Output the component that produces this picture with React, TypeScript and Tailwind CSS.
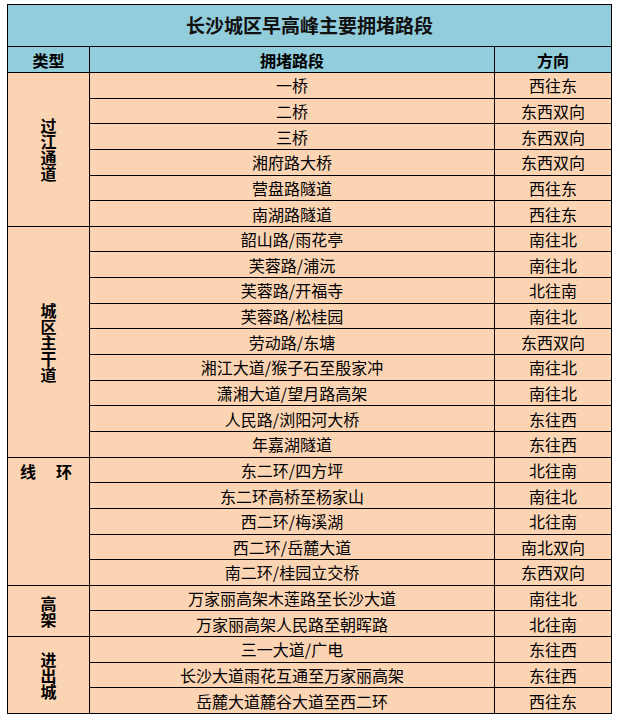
import React from "react";

type Row = [string, string];
type Group = { label: string; kind: "v" | "h"; rows: Row[] };

const groups: Group[] = [
  {
    label: "过江通道",
    kind: "v",
    rows: [
      ["一桥", "西往东"],
      ["二桥", "东西双向"],
      ["三桥", "东西双向"],
      ["湘府路大桥", "东西双向"],
      ["营盘路隧道", "西往东"],
      ["南湖路隧道", "西往东"],
    ],
  },
  {
    label: "城区主干道",
    kind: "v",
    rows: [
      ["韶山路/雨花亭", "南往北"],
      ["芙蓉路/浦沅", "南往北"],
      ["芙蓉路/开福寺", "北往南"],
      ["芙蓉路/松桂园", "南往北"],
      ["劳动路/东塘", "东西双向"],
      ["湘江大道/猴子石至殷家冲", "南往北"],
      ["潇湘大道/望月路高架", "南往北"],
      ["人民路/浏阳河大桥", "东往西"],
      ["年嘉湖隧道", "东往西"],
    ],
  },
  {
    label: "线环",
    kind: "h",
    rows: [
      ["东二环/四方坪", "北往南"],
      ["东二环高桥至杨家山", "南往北"],
      ["西二环/梅溪湖", "北往南"],
      ["西二环/岳麓大道", "南北双向"],
      ["南二环/桂园立交桥", "东西双向"],
    ],
  },
  {
    label: "高架",
    kind: "v",
    rows: [
      ["万家丽高架木莲路至长沙大道", "南往北"],
      ["万家丽高架人民路至朝晖路", "北往南"],
    ],
  },
  {
    label: "进出城",
    kind: "v",
    rows: [
      ["三一大道/广电", "东往西"],
      ["长沙大道雨花互通至万家丽高架", "东往西"],
      ["岳麓大道麓谷大道至西二环", "西往东"],
    ],
  },
];

const spanClass: Record<number, string> = {
  2: "row-span-2",
  3: "row-span-3",
  5: "row-span-5",
  6: "row-span-6",
  9: "row-span-9",
};

export default function App() {
  return (
    <div
      className="bg-white w-[626px] h-[723px] pt-[4px] pl-[7px]"
      style={{ fontFamily: '"Noto Sans CJK SC", "Noto Sans", sans-serif' }}
    >
      <div className="grid w-[605px] h-[710px] bg-black p-px gap-px grid-cols-[81px_404px_116px] grid-rows-[41px_25px_repeat(25,minmax(0,1fr))] text-[16px] text-black">
        <div className="col-span-3 bg-[#92cddc] flex items-center justify-center font-bold text-[19px] text-[#111]">
          长沙城区早高峰主要拥堵路段
        </div>
        <div className="bg-[#92cddc] flex items-center justify-center font-bold">类型</div>
        <div className="bg-[#92cddc] flex items-center justify-center font-bold">拥堵路段</div>
        <div className="bg-[#92cddc] flex items-center justify-center font-bold">方向</div>
        {groups.map((g) => (
          <React.Fragment key={g.label}>
            {g.kind === "v" ? (
              <div
                className={`${spanClass[g.rows.length]} bg-[#fbd4b4] flex flex-col items-center justify-center font-bold leading-[16px]`}
              >
                {g.label.split("").map((c, i) => (
                  <span key={i}>{c}</span>
                ))}
              </div>
            ) : (
              <div
                className={`${spanClass[g.rows.length]} bg-[#fbd4b4] flex flex-row items-start pl-[12px] pt-[2px] gap-[20px] font-bold leading-[22px]`}
              >
                <span>线</span>
                <span>环</span>
              </div>
            )}
            {g.rows.map(([road, dir], i) => (
              <React.Fragment key={i}>
                <div className="bg-[#fbd4b4] flex items-center justify-center leading-none">{road}</div>
                <div className="bg-[#fbd4b4] flex items-center justify-center leading-none">{dir}</div>
              </React.Fragment>
            ))}
          </React.Fragment>
        ))}
      </div>
    </div>
  );
}
